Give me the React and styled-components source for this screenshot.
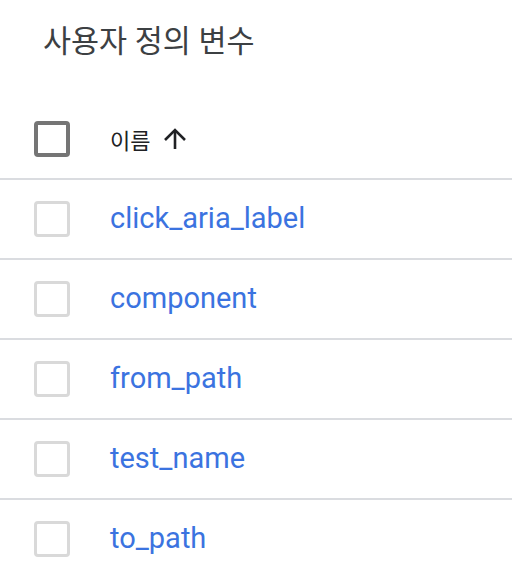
import React from "react";
import styled, { createGlobalStyle } from "styled-components";

const Global = createGlobalStyle`
  html, body {
    margin: 0;
    padding: 0;
    background: #fff;
    font-family: Roboto, "Noto Sans CJK KR", sans-serif;
  }
`;

const Page = styled.div`
  width: 512px;
  height: 576px;
  overflow: hidden;
`;

const Title = styled.h2`
  margin: 0;
  padding: 24px 0 40px 43px;
  line-height: 36px;
  font-size: 30.5px;
  font-weight: 400;
  color: #3c4043;
  font-family: Roboto, "Noto Sans CJK KR", sans-serif;
`;

const Row = styled.div`
  display: flex;
  align-items: center;
  height: 78px;
  padding-left: 34px;
  gap: 40px;
  border-bottom: 2px solid #dadce0;
`;

const Check = styled.span`
  width: 36px;
  height: 36px;
  box-sizing: border-box;
  border: ${props => (props.dark ? "4px solid #757575" : "3px solid #d9d9d9")};
  border-radius: 4px;
  flex-shrink: 0;
`;

const HeadLabel = styled.span`
  display: flex;
  align-items: center;
  gap: 13px;
  font-size: 22px;
  color: #202124;
  font-weight: 400;
`;

const Name = styled.a`
  font-size: 29px;
  line-height: 34px;
  margin-top: -2px;
  color: #3b73e0;
  text-decoration: none;
  font-family: Roboto, sans-serif;
`;

const ArrowUp = () => (
  <svg width="24" height="24" viewBox="0 0 24 24" fill="none" stroke="#202124" strokeWidth="2.6">
    <path d="M12 22V4" />
    <path d="M2 13L12 3l10 10" />
  </svg>
);

const names = ["click_aria_label", "component", "from_path", "test_name", "to_path"];

export default function App() {
  return (
    <Page>
      <Global />
      <Title>사용자 정의 변수</Title>
      <Row>
        <Check dark />
        <HeadLabel>
          이름 <ArrowUp />
        </HeadLabel>
      </Row>
      {names.map(n => (
        <Row key={n}>
          <Check />
          <Name>{n}</Name>
        </Row>
      ))}
    </Page>
  );
}
